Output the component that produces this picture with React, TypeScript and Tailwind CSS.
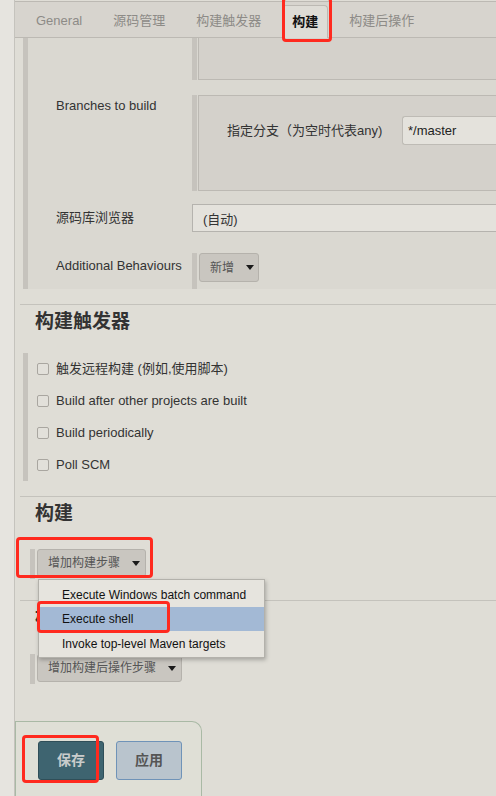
import React from "react";

const FONT = '"Liberation Sans", "Noto Sans CJK SC", sans-serif';

function Arrow() {
  return (
    <svg width="8" height="5" viewBox="0 0 8 5" className="ml-[12px] shrink-0">
      <path d="M0 0 L8 0 L4 5 Z" fill="#1a1a1a" />
    </svg>
  );
}

function Bar({ h }: { h: string }) {
  return <div className={`w-[5px] shrink-0 bg-[#c6c3bd] ${h}`} />;
}

function Checkbox() {
  return (
    <div className="w-[12px] h-[12px] rounded-[2px] border border-[#a9a6a0] bg-[#e2e0da] shrink-0" />
  );
}

export default function App() {
  const tabs = ["General", "源码管理", "构建触发器", "构建", "构建后操作"];
  return (
    <div
      className="w-[496px] h-[796px] overflow-hidden flex bg-[#dfddd6] text-[13px] text-[#333]"
      style={{ fontFamily: FONT }}
    >
      <div className="w-[15px] shrink-0 bg-[#e6e4df] border-r border-[#c5c3bd]" />
      <div className="relative flex-1 flex flex-col min-w-0">
        {/* Tabs */}
        <div className="mt-[1px] h-[37px] border-t border-b border-[#bcb9b3] bg-[#d7d4ce] flex items-end pl-[11px] gap-[11px] shrink-0 whitespace-nowrap">
          {tabs.map((t) =>
            t === "构建" ? (
              <div
                key={t}
                className="h-[33px] mb-[-1px] px-[9px] flex items-center border border-b-0 border-[#bcb9b3] rounded-t-[4px] bg-[#dedcd6] font-bold text-[#111]"
              >
                {t}
              </div>
            ) : (
              <div key={t} className="h-[33px] px-[10px] flex items-center text-[#8d8b87]">
                {t}
              </div>
            )
          )}
        </div>

        {/* Git section */}
        <div className="ml-[8px] flex h-[251px] shrink-0">
          <Bar h="h-full" />
          <div className="flex-1 bg-[#dad8d1] flex flex-col">
            <div className="flex h-[42px]">
              <div className="w-[164px] shrink-0" />
              <Bar h="h-full" />
              <div className="ml-[1px] flex-1 border-l border-b border-[#bcb9b3] bg-[#d4d1cb]" />
            </div>
            <div className="h-[15px]" />
            <div className="flex h-[96px]">
              <div className="w-[164px] shrink-0 pl-[28px] pt-[3px] leading-[16px]">Branches to build</div>
              <Bar h="h-full" />
              <div className="ml-[1px] flex-1 border-l border-t border-b border-[#bcb9b3] bg-[#d4d1cb] pt-[20px] pl-[28px] flex items-start">
                <div className="w-[175px] shrink-0 h-[29px] flex items-center whitespace-nowrap">指定分支（为空时代表any)</div>
                <div className="flex-1 h-[29px] bg-[#e4e2dc] border border-r-0 border-[#bebbb5] rounded-l-[3px] flex items-center px-[5px] text-[#222]">
                  */master
                </div>
              </div>
            </div>
            <div className="h-[13px]" />
            <div className="flex h-[28px] items-center">
              <div className="w-[164px] shrink-0 pl-[28px]">源码库浏览器</div>
              <div className="flex-1 h-[28px] bg-[#e4e2dc] border border-r-0 border-[#b5b3ae] flex items-center pl-[10px] pt-[4px] text-[#333]">
                (自动)
              </div>
            </div>
            <div className="h-[21px]" />
            <div className="flex h-[36px]">
              <div className="w-[164px] shrink-0 pl-[28px] pt-[5px] leading-[16px] whitespace-nowrap">Additional Behaviours</div>
              <Bar h="h-full" />
              <div className="ml-[2px] h-[29px] w-[60px] bg-[#c9c6c0] border border-[#b5b2ac] rounded-[3px] flex items-center pl-[10px] text-[#555] text-[12px] whitespace-nowrap">
                新增
                <Arrow />
              </div>
            </div>
          </div>
        </div>

        <div className="h-[15px] shrink-0" />
        <div className="ml-[5px] border-t border-[#c4c2bc] shrink-0" />
        <div className="mt-[4px] h-[26px] pl-[20px] text-[19px] font-bold text-[#333] leading-[26px] shrink-0">构建触发器</div>
        <div className="h-[18px] shrink-0" />

        {/* Trigger checkboxes */}
        <div className="ml-[8px] flex h-[128px] shrink-0">
          <Bar h="h-full" />
          <div className="flex flex-col pl-[9px]">
            {["触发远程构建 (例如,使用脚本)", "Build after other projects are built", "Build periodically", "Poll SCM"].map((t) => (
              <div key={t} className="h-[32px] flex items-center gap-[7px] whitespace-nowrap">
                <Checkbox />
                <span>{t}</span>
              </div>
            ))}
          </div>
        </div>

        <div className="h-[15px] shrink-0" />
        <div className="ml-[5px] border-t border-[#c4c2bc] shrink-0" />
        <div className="mt-[4px] h-[26px] pl-[20px] text-[19px] font-bold text-[#333] leading-[26px] shrink-0">构建</div>
        <div className="h-[22px] shrink-0" />

        <div className="ml-[15px] flex shrink-0">
          <Bar h="h-[30px]" />
          <div className="ml-[2px] h-[28px] w-[109px] bg-[#c9c6c0] border border-[#b5b2ac] rounded-[3px] flex items-center pl-[10px] text-[#555] text-[12px] whitespace-nowrap">
            增加构建步骤
            <Arrow />
          </div>
        </div>

        <div className="h-[21px] shrink-0" />
        <div className="ml-[5px] border-t border-[#c4c2bc] shrink-0" />
        <div className="mt-[4px] h-[26px] pl-[20px] text-[19px] font-bold text-[#333] leading-[26px] shrink-0">构建后操作</div>
        <div className="h-[23px] shrink-0" />

        <div className="ml-[15px] flex shrink-0">
          <Bar h="h-[30px]" />
          <div className="ml-[2px] h-[28px] w-[145px] bg-[#c9c6c0] border border-[#b5b2ac] rounded-[3px] flex items-center pl-[10px] text-[#555] text-[12px] whitespace-nowrap">
            增加构建后操作步骤
            <Arrow />
          </div>
        </div>

        <div className="h-[37px] shrink-0" />

        {/* Bottom panel */}
        <div className="w-[187px] flex-1 border-t border-r border-l border-[#a9b9a5] rounded-tr-[10px] bg-[#dfdfd6] pt-[19px] pl-[22px] flex items-start gap-[12px]">
          <div className="w-[66px] h-[39px] bg-[#3e6470] border border-[#2f4e58] rounded-[3px] flex items-center justify-center text-[#c9cccc] font-bold text-[14px]">
            保存
          </div>
          <div className="w-[66px] h-[39px] bg-[#b9c4cd] border border-[#6f93b8] rounded-[3px] flex items-center justify-center text-[#555] font-bold text-[14px]">
            应用
          </div>
        </div>

        {/* Dropdown menu */}
        <div className="absolute left-[23px] top-[579px] w-[227px] h-[79px] bg-[#e6e4de] border border-[#b3b1ab] shadow-[1px_2px_4px_rgba(0,0,0,0.25)] pt-[2px] flex flex-col text-[12px] whitespace-nowrap">
          <div className="h-[25px] flex items-center pl-[23px] text-[#111]">Execute Windows batch command</div>
          <div className="h-[24px] flex items-center pl-[23px] text-[#111] bg-[#a3b9d5]">Execute shell</div>
          <div className="h-[25px] flex items-center pl-[23px] text-[#111]">Invoke top-level Maven targets</div>
        </div>

        {/* Red annotation boxes */}
        <div className="absolute left-[267px] top-[-3px] w-[50px] h-[45px] border-[3px] border-[#ff2a1f] rounded-[4px]" />
        <div className="absolute left-[1px] top-[537px] w-[137px] h-[41px] border-[3px] border-[#ff2a1f] rounded-[4px]" />
        <div className="absolute left-[22px] top-[601px] w-[133px] h-[32px] border-[3px] border-[#ff2a1f] rounded-[4px]" />
        <div className="absolute left-[7px] top-[735px] w-[77px] h-[48px] border-[3px] border-[#ff2a1f] rounded-[4px]" />
      </div>
    </div>
  );
}
